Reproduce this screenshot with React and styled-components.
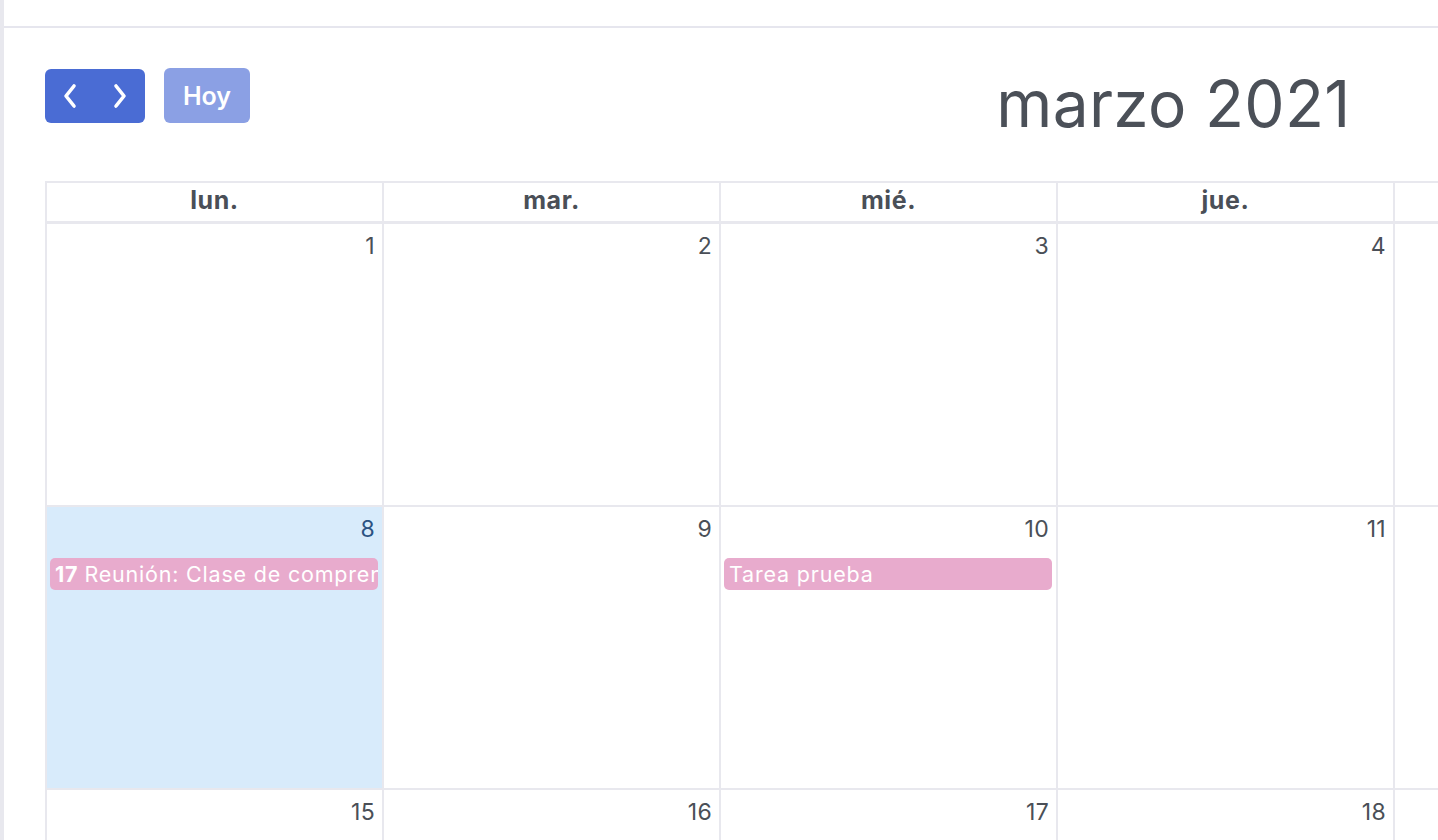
import React from "react";
import styled, { createGlobalStyle } from "styled-components";

const GlobalStyle = createGlobalStyle`
  body {
    margin: 0;
    overflow: hidden;
    background: #ffffff;
    font-family: "Inter", "Open Sans", sans-serif;
  }
`;

const Page = styled.div`
  display: flex;
  width: 1438px;
  height: 840px;
  overflow: hidden;
`;

const SideEdge = styled.div`
  width: 4px;
  flex-shrink: 0;
  background: #e8e8ee;
`;

const Main = styled.div`
  flex: 1;
  display: flex;
  flex-direction: column;
  min-width: 0;
  overflow: hidden;
`;

const TopBar = styled.div`
  height: 26px;
  flex-shrink: 0;
  border-bottom: 2px solid #e6e6ee;
`;

const Content = styled.div`
  padding: 40px 0 0 41px;
`;

const Toolbar = styled.div`
  display: flex;
  justify-content: space-between;
  align-items: flex-start;
  width: 2361px;
  height: 113px;
`;

const ButtonGroup = styled.div`
  display: flex;
  align-items: center;
  gap: 19px;
`;

const NavGroup = styled.div`
  display: flex;
  background: #4a6cd4;
  border-radius: 6px;
  overflow: hidden;
`;

const NavButton = styled.button`
  width: 50px;
  height: 54px;
  border: none;
  background: transparent;
  padding: 0;
  display: flex;
  align-items: center;
  justify-content: center;
  cursor: pointer;
`;

const TodayButton = styled.button`
  width: 86px;
  height: 55px;
  border: none;
  border-radius: 6px;
  background: #8ba0e4;
  color: #ffffff;
  font-family: inherit;
  font-size: 25px;
  font-weight: 600;
  cursor: pointer;
`;

const Title = styled.h2`
  margin: 0;
  font-size: 64px;
  font-weight: 400;
  line-height: 72px;
  color: #4b5058;
  letter-spacing: 0.3px;
`;

const RightChunk = styled.div`
  width: 309px;
`;

/* only the part of the month grid that fits in the window is drawn */
const Grid = styled.div`
  display: grid;
  grid-template-columns: repeat(5, 337px);
  border-left: 2px solid #e8e8ee;
  border-top: 2px solid #e8e8ee;
  width: max-content;
`;

const HeadCell = styled.div`
  box-sizing: border-box;
  height: 41px;
  padding-bottom: 4px;
  border-right: 2px solid #e8e8ee;
  border-bottom: 3px solid #e8e8ee;
  display: flex;
  align-items: center;
  justify-content: center;
  font-size: 25px;
  font-weight: 700;
  letter-spacing: 0.6px;
  color: #4a4f57;
`;

const DayCell = styled.div`
  height: 283px;
  box-sizing: border-box;
  border-right: 2px solid #e8e8ee;
  border-bottom: 2px solid #e8e8ee;
  background: ${p => (p.today ? "#d8ebfb" : "#ffffff")};
  display: flex;
  flex-direction: column;
  overflow: hidden;
`;

const DayNumber = styled.div`
  align-self: flex-end;
  padding: 7px 7px 0 0;
  height: 40px;
  box-sizing: border-box;
  font-size: 23px;
  line-height: 30px;
  letter-spacing: 0.3px;
  color: ${p => (p.today ? "#2b5282" : "#4a4f57")};
`;

const Event = styled.div`
  margin: 11px 4px 0 3px;
  height: 32px;
  border-radius: 5px;
  background: #e8abcd;
  color: #ffffff;
  font-size: 21.5px;
  line-height: 32px;
  letter-spacing: 0.8px;
  padding-left: 5px;
  white-space: nowrap;
  overflow: hidden;
`;

const EventTime = styled.b`
  font-weight: 700;
  margin-right: 6px;
`;

const Chevron = ({ dir }) => (
  <svg width="22" height="26" viewBox="0 0 22 26">
    <polyline
      points={dir === "left" ? "15,3 7,13 15,23" : "7,3 15,13 7,23"}
      fill="none"
      stroke="#ffffff"
      strokeWidth="3.6"
      strokeLinecap="round"
      strokeLinejoin="round"
    />
  </svg>
);

const weekdays = ["lun.", "mar.", "mié.", "jue.", ""];

const events = {
  8: { time: "17", title: "Reunión: Clase de comprensión lectora" },
  10: { title: "Tarea prueba" }
};

// the first three weeks, mon-thu; the fifth column is the friday cut by the edge
const weeks = [0, 1, 2].map(w =>
  [0, 1, 2, 3, 4].map(d => (d === 4 ? null : w * 7 + d + 1))
);

export default function App() {
  return (
    <>
      <GlobalStyle />
      <Page>
        <SideEdge />
        <Main>
          <TopBar />
          <Content>
            <Toolbar>
              <ButtonGroup>
                <NavGroup>
                  <NavButton aria-label="prev">
                    <Chevron dir="left" />
                  </NavButton>
                  <NavButton aria-label="next">
                    <Chevron dir="right" />
                  </NavButton>
                </NavGroup>
                <TodayButton>Hoy</TodayButton>
              </ButtonGroup>
              <Title>marzo 2021</Title>
              <RightChunk />
            </Toolbar>
            <Grid>
              {weekdays.map((w, i) => (
                <HeadCell key={i}>{w}</HeadCell>
              ))}
              {weeks.map((week, wi) =>
                week.map((num, di) => {
                  const today = num === 8;
                  const ev = num !== null && events[num];
                  return (
                    <DayCell key={wi + "-" + di} today={today}>
                      {num !== null && (
                        <DayNumber today={today}>{num}</DayNumber>
                      )}
                      {ev && (
                        <Event>
                          {ev.time && <EventTime>{ev.time}</EventTime>}
                          {ev.title}
                        </Event>
                      )}
                    </DayCell>
                  );
                })
              )}
            </Grid>
          </Content>
        </Main>
      </Page>
    </>
  );
}
